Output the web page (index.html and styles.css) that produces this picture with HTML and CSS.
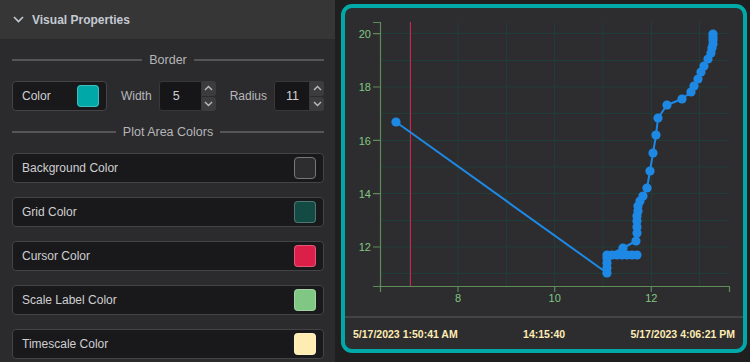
FILE: index.html
```html
<!doctype html>
<html>

<head>
    <title>chart settings</title>
    <meta charset="UTF-8">
    <link rel="stylesheet" href="styles.css">
</head>

<body>
    <div class="app">
        <aside class="props">
            <div class="props-head">
                <svg class="chev" width="11" height="7" viewBox="0 0 11 7"><path d="M1 1 L5.5 5.5 L10 1" fill="none" stroke="#c5cad3" stroke-width="1.6"/></svg>
                <span>Visual Properties</span>
            </div>
            <div class="props-body">
                <div class="sep"><span>Border</span></div>
                <div class="border-row">
                    <div class="field color-field">
                        <span>Color</span>
                        <span class="swatch sw-teal"></span>
                    </div>
                    <span class="num-label">Width</span>
                    <div class="num">
                        <span class="num-val">5</span>
                        <div class="spin">
                            <span class="spin-btn"><svg width="9" height="6" viewBox="0 0 9 6"><path d="M1 5 L4.5 1.5 L8 5" fill="none" stroke="#bbb" stroke-width="1.4"/></svg></span>
                            <span class="spin-btn"><svg width="9" height="6" viewBox="0 0 9 6"><path d="M1 1 L4.5 4.5 L8 1" fill="none" stroke="#bbb" stroke-width="1.4"/></svg></span>
                        </div>
                    </div>
                    <span class="num-label">Radius</span>
                    <div class="num num-narrow">
                        <span class="num-val">11</span>
                        <div class="spin">
                            <span class="spin-btn"><svg width="9" height="6" viewBox="0 0 9 6"><path d="M1 5 L4.5 1.5 L8 5" fill="none" stroke="#bbb" stroke-width="1.4"/></svg></span>
                            <span class="spin-btn"><svg width="9" height="6" viewBox="0 0 9 6"><path d="M1 1 L4.5 4.5 L8 1" fill="none" stroke="#bbb" stroke-width="1.4"/></svg></span>
                        </div>
                    </div>
                </div>
                <div class="sep"><span>Plot Area Colors</span></div>
                <div class="field color-row"><span>Background Color</span><span class="swatch sw-bg"></span></div>
                <div class="field color-row"><span>Grid Color</span><span class="swatch sw-grid"></span></div>
                <div class="field color-row"><span>Cursor Color</span><span class="swatch sw-cursor"></span></div>
                <div class="field color-row"><span>Scale Label Color</span><span class="swatch sw-scale"></span></div>
                <div class="field color-row"><span>Timescale Color</span><span class="swatch sw-time"></span></div>
            </div>
        </aside>
        <main class="stage">
            <div class="card">
                <svg class="plot" width="397" height="308" viewBox="345 8 397 308">
                    <!-- grid -->
                    <g stroke="#213d3a" stroke-width="1">
                        <path d="M380 33.5 H729 M380 60.5 H729 M380 87 H729 M380 113.5 H729 M380 140.5 H729 M380 167 H729 M380 193.5 H729 M380 220.5 H729 M380 247 H729 M380 273.5 H729"/>
                        <path d="M409.5 22 V286 M458 22 V286 M506.5 22 V286 M554.5 22 V286 M603 22 V286 M651.5 22 V286 M699.5 22 V286"/>
                    </g>
                    <!-- cursor -->
                    <path d="M410.5 22 V286" stroke="#dc1f48" stroke-width="1"/>
                    <!-- axes -->
                    <g stroke="#5f8a5a" stroke-width="1.2" fill="none">
                        <path d="M373 22.5 H380.5 V286.5 H729.5 V292"/>
                        <path d="M380.5 286.5 V292 M373 286.5 H380"/>
                        <path d="M373 33.6 H380 M373 87 H380 M373 140.3 H380 M373 193.7 H380 M373 247 H380"/>
                        <path d="M458 286 V292 M554.7 286 V292 M651.3 286 V292"/>
                    </g>
                    <g class="tick-label" text-anchor="end">
                        <text x="371" y="37.5">20</text>
                        <text x="371" y="91">18</text>
                        <text x="371" y="144.5">16</text>
                        <text x="371" y="198">14</text>
                        <text x="371" y="251">12</text>
                    </g>
                    <g class="tick-label" text-anchor="middle">
                        <text x="458" y="301.5">8</text>
                        <text x="554.7" y="301.5">10</text>
                        <text x="651.3" y="301.5">12</text>
                    </g>
                    <!-- series -->
                    <polyline fill="none" stroke="#1e88e5" stroke-width="2" stroke-linejoin="round"
                        points="396,122 607,273 607,268 607,263 607,258 607,255 612,255 617,255 622,255 627,255 632,255 637,255 615,252 623,248 636,241 637,233 637,227 637,221 637,216 638,211 638,206 640,201 643,196 647,188 650,171 653,153 656,135 658,118 667,105 682,99 691,92 694,86 698,79 701,72 704,66 708,59 711,53 712,48 713,44 713,40 713,37 713,34"/>
                    <g fill="#1e88e5">
                        <circle cx="396" cy="122" r="4.6"/>
                        <circle cx="607" cy="273" r="4.6"/><circle cx="607" cy="268" r="4.6"/><circle cx="607" cy="263" r="4.6"/>
                        <circle cx="607" cy="258" r="4.6"/><circle cx="607" cy="255" r="4.6"/><circle cx="612" cy="255" r="4.6"/>
                        <circle cx="617" cy="255" r="4.6"/><circle cx="622" cy="255" r="4.6"/><circle cx="627" cy="255" r="4.6"/>
                        <circle cx="632" cy="255" r="4.6"/><circle cx="637" cy="255" r="4.6"/>
                        <circle cx="623" cy="248" r="4.6"/><circle cx="636" cy="241" r="4.6"/>
                        <circle cx="637" cy="233" r="4.6"/><circle cx="637" cy="227" r="4.6"/><circle cx="637" cy="221" r="4.6"/>
                        <circle cx="637" cy="216" r="4.6"/><circle cx="638" cy="211" r="4.6"/><circle cx="638" cy="206" r="4.6"/>
                        <circle cx="640" cy="201" r="4.6"/><circle cx="643" cy="196" r="4.6"/><circle cx="647" cy="188" r="4.6"/>
                        <circle cx="650" cy="171" r="4.6"/><circle cx="653" cy="153" r="4.6"/><circle cx="656" cy="135" r="4.6"/>
                        <circle cx="658" cy="118" r="4.6"/><circle cx="667" cy="105" r="4.6"/><circle cx="682" cy="99" r="4.6"/>
                        <circle cx="691" cy="92" r="4.6"/><circle cx="694" cy="86" r="4.6"/><circle cx="698" cy="79" r="4.6"/>
                        <circle cx="701" cy="72" r="4.6"/><circle cx="704" cy="66" r="4.6"/><circle cx="708" cy="59" r="4.6"/>
                        <circle cx="711" cy="53" r="4.6"/><circle cx="712" cy="48" r="4.6"/><circle cx="713" cy="44" r="4.6"/>
                        <circle cx="713" cy="40" r="4.6"/><circle cx="713" cy="37" r="4.6"/><circle cx="713" cy="34" r="4.6"/>
                    </g>
                </svg>
                <div class="foot">
                    <span>5/17/2023 1:50:41 AM</span>
                    <span>14:15:40</span>
                    <span>5/17/2023 4:06:21 PM</span>
                </div>
            </div>
        </main>
    </div>
</body>

</html>
```

FILE: styles.css
```css
body {
    margin: 0;
    background-color: #1f1f20;
    font-family: "Liberation Sans", Arial, sans-serif;
}

.app {
    display: flex;
    width: 750px;
    height: 362px;
    overflow: hidden;
}

/* left property panel */
.props {
    width: 335px;
    flex-shrink: 0;
    background-color: #2b2b2e;
}

.props-head {
    height: 39px;
    display: flex;
    align-items: center;
    padding-left: 13px;
    background-color: #363637;
    color: #c5cad3;
    font-size: 12px;
    font-weight: bold;
}

.chev {
    margin-right: 8px;
}

.props-body {
    display: flex;
    flex-direction: column;
    gap: 14px;
    padding: 14px 11px 0 12px;
}

.sep {
    height: 14px;
    display: flex;
    align-items: center;
    gap: 7px;
    color: #b5b5b8;
    font-size: 12.5px;
}

.sep::before,
.sep::after {
    content: "";
    flex: 1;
    height: 2px;
    background-color: #555558;
}

.field {
    box-sizing: border-box;
    height: 30px;
    display: flex;
    align-items: center;
    justify-content: space-between;
    background-color: #19191b;
    border: 1px solid #444447;
    border-radius: 4px;
    color: #cfcfd2;
    font-size: 12px;
}

.color-row {
    padding: 0 7px 0 9px;
}

.border-row {
    height: 30px;
    display: flex;
    align-items: center;
}

.color-field {
    width: 95px;
    padding: 0 7px 0 9px;
}

.swatch {
    box-sizing: border-box;
    width: 22px;
    height: 22px;
    border-radius: 4px;
    border: 1px solid rgba(255, 255, 255, 0.25);
}

.sw-teal { background-color: #00a8a8; }
.sw-bg { background-color: #2d2d2f; border-color: #77777a; }
.sw-grid { background-color: #134a44; }
.sw-cursor { background-color: #dc1f48; }
.sw-scale { background-color: #81c784; }
.sw-time { background-color: #ffecb3; }

.num-label {
    color: #b8b8bb;
    font-size: 12px;
    margin: 0 7px 0 14px;
}

.num {
    display: flex;
    height: 30px;
}

.num-val {
    box-sizing: border-box;
    width: 43px;
    display: flex;
    align-items: center;
    padding-left: 13px;
    background-color: #161618;
    border: 1px solid #38383b;
    border-radius: 3px 0 0 3px;
    color: #d0d0d3;
    font-size: 12.5px;
}

.num-narrow .num-val {
    width: 36px;
    padding-left: 11px;
}

.spin {
    width: 14px;
    display: flex;
    flex-direction: column;
    gap: 1px;
}

.spin-btn {
    flex: 1;
    display: flex;
    align-items: center;
    justify-content: center;
    background-color: #3c3c3f;
    border-radius: 0 3px 3px 0;
}

/* chart side */
.stage {
    flex: 1;
    padding: 4px 3px 0 6px;
}

.card {
    width: 406px;
    box-sizing: border-box;
    border: 4px solid #00a8a8;
    border-radius: 11px;
    background-color: #2d2d2f;
    overflow: hidden;
}

.plot {
    display: block;
}

.tick-label {
    fill: #81c784;
    font-family: "Liberation Sans", Arial, sans-serif;
    font-size: 11px;
}

.foot {
    height: 31px;
    border-top: 2px solid #444446;
    display: flex;
    align-items: center;
    justify-content: space-between;
    padding: 0 8px;
    color: #ffecb3;
    font-size: 10.5px;
    font-weight: bold;
}
```
